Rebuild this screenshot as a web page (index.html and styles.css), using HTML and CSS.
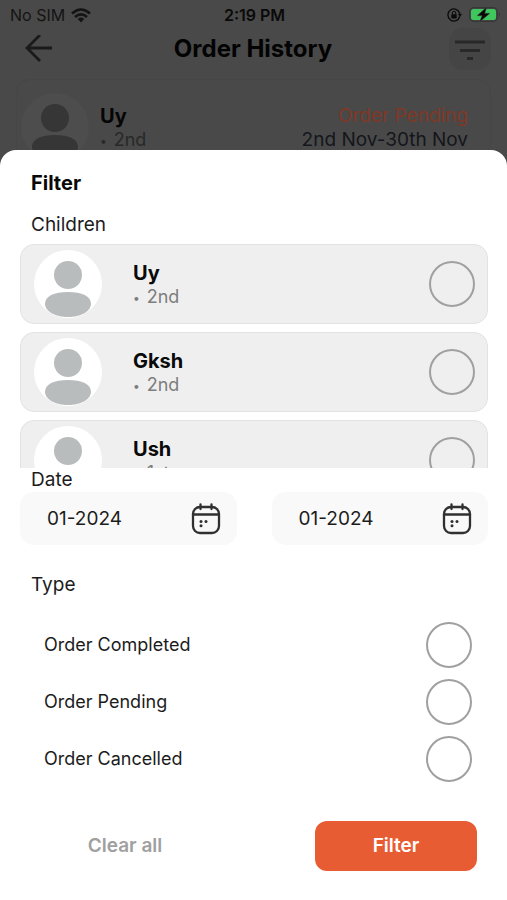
FILE: index.html
```html
<!DOCTYPE html>
<html lang="en">
<head>
<meta charset="utf-8">
<meta name="viewport" content="width=device-width, initial-scale=1">
<title>Order History</title>
<link rel="stylesheet" href="styles.css">
</head>
<body>
<svg class="sprite" aria-hidden="true">
  <symbol id="person" viewBox="0 0 68 68">
    <circle cx="34" cy="25" r="14"/>
    <path d="M11 54C11 46 20 42 34 42s23 4 23 12c0 7-10 13-23 13S11 61 11 54Z"/>
  </symbol>
  <symbol id="calendar" viewBox="0 0 30 32">
    <g fill="none" stroke="currentColor" stroke-width="2.300" stroke-linecap="round">
      <rect x="2" y="4" width="26" height="26" rx="7"/>
      <path d="M2 11.500H28M9.500 1.500V6M20.500 1.500V6"/>
    </g>
    <g fill="currentColor"><circle cx="10" cy="18.500" r="1.500"/><circle cx="15" cy="18.500" r="1.500"/><circle cx="10" cy="22.700" r="1.500"/></g>
  </symbol>
</svg>

<div class="screen">
  <div class="status">
    <div class="carrier">
      <span>No SIM</span>
      <svg width="20" height="15" viewBox="0 0 20 15" fill="none" stroke="currentColor" stroke-width="2.600">
        <path d="M1 5.500Q10-2.500 19 5.500M4 9Q10 3.600 16 9"/>
        <path d="M6.800 11Q10 8.200 13.200 11L10 14.500Z" fill="currentColor" stroke="none"/>
      </svg>
    </div>
    <span class="time">2:19 PM</span>
    <div class="indicators">
      <svg width="15" height="14" viewBox="0 0 15 14">
        <path d="M12.700 8.500A6 6 0 1 1 12.700 5.500" fill="none" stroke="currentColor" stroke-width="1.300"/>
        <path d="M10.800 5.800H15L13 9Z" fill="currentColor"/>
        <rect x="4.300" y="6.200" width="5.400" height="4.200" rx="0.800" fill="currentColor"/>
        <path d="M5.300 6.500V5a1.700 1.700 0 0 1 3.400 0V6.500" fill="none" stroke="currentColor"/>
      </svg>
      <svg width="33" height="16" viewBox="0 0 33 16">
        <rect x="0.700" y="0.700" width="27.600" height="13.600" rx="4" fill="none" stroke="#363636" stroke-width="1.200"/>
        <rect x="2" y="2" width="25" height="11" rx="2.500" fill="#3fc65c"/>
        <path d="M30 5Q32 7.500 30 10Z" fill="#363636"/>
        <path d="M17.800 0 8 8.700H13L10.500 15 21 6.300H15.800Z" fill="#080808" stroke="#3a5a40" stroke-width="0.500"/>
      </svg>
    </div>
  </div>

  <header class="topbar">
    <button class="back" type="button" aria-label="Back">
      <svg width="28" height="28" viewBox="0 0 28 28" fill="none" stroke="currentColor" stroke-width="2.800"><path d="M27 13H2M15 0 2 13 15 26"/></svg>
    </button>
    <h1>Order History</h1>
    <button class="sort" type="button" aria-label="Open filter">
      <svg width="32" height="22" viewBox="0 0 32 22" stroke="currentColor" stroke-width="3"><path d="M1 4H31M6 12.500H26M13 20.500H19"/></svg>
    </button>
  </header>

  <article class="order">
    <svg class="avatar"><use href="#person"/></svg>
    <div class="who"><strong>Uy</strong><span class="grade"><i>•</i>2nd</span></div>
    <div class="state"><span class="pending">Order Pending</span><span>2nd Nov-30th Nov</span></div>
  </article>
</div>

<form class="sheet" role="dialog" aria-labelledby="sheet-title">
  <h2 id="sheet-title">Filter</h2>
  <h3 class="children-title">Children</h3>
  <div class="children">
    <label class="child">
      <svg class="avatar"><use href="#person"/></svg>
      <span class="who"><strong>Uy</strong><span class="grade"><i>•</i>2nd</span></span>
      <input type="radio" name="child">
    </label>
    <label class="child">
      <svg class="avatar"><use href="#person"/></svg>
      <span class="who"><strong>Gksh</strong><span class="grade"><i>•</i>2nd</span></span>
      <input type="radio" name="child">
    </label>
    <label class="child">
      <svg class="avatar"><use href="#person"/></svg>
      <span class="who"><strong>Ush</strong><span class="grade"><i>•</i>1st</span></span>
      <input type="radio" name="child">
    </label>
  </div>

  <h3 class="date-title">Date</h3>
  <div class="dates">
    <label class="date"><input type="text" value="01-2024" aria-label="From month"><svg width="30" height="32"><use href="#calendar"/></svg></label>
    <label class="date"><input type="text" value="01-2024" aria-label="To month"><svg width="30" height="32"><use href="#calendar"/></svg></label>
  </div>

  <h3 class="type-title">Type</h3>
  <div class="types">
    <label><span>Order Completed</span><input type="radio" name="type"></label>
    <label><span>Order Pending</span><input type="radio" name="type"></label>
    <label><span>Order Cancelled</span><input type="radio" name="type"></label>
  </div>

  <div class="actions">
    <button class="clear" type="reset">Clear all</button>
    <button class="apply" type="button">Filter</button>
  </div>
</form>
</body>
</html>
```
FILE: styles.css
```css
* { box-sizing: border-box; }
body {
  margin: 0;
  min-height: 100vh;
  display: flex;
  flex-direction: column;
  background: #494949;
  color: #1c1c1c;
  font-family: Inter, "Liberation Sans", sans-serif;
  font-size: 18px;
  line-height: 24px;
}
h1, h2, h3 { margin: 0; }
button { border: 0; padding: 0; background: none; font: inherit; color: inherit; }
svg { display: block; flex: none; }
.sprite { position: absolute; width: 0; height: 0; }

.screen { height: 170px; overflow: hidden; color: #0a0a0a; }
.status {
  display: grid;
  grid-template-columns: 1fr auto 1fr;
  align-items: center;
  height: 28px;
  padding: 2px 8px 0 10px;
  font-size: 16px;
}
.carrier { display: flex; align-items: center; gap: 6px; color: #141414; }
.time { font-weight: 600; }
.indicators { display: flex; align-items: center; justify-content: flex-end; gap: 7px; margin-right: -3px; }
.topbar {
  display: grid;
  grid-template-columns: 32px 1fr 42px;
  align-items: center;
  height: 40px;
  padding: 0 16px 0 25px;
}
.back { color: #1a1a1a; }
.topbar h1 { font-size: 24px; line-height: 28px; text-align: center; color: #030303; }
.sort {
  display: grid;
  place-items: center;
  width: 42px;
  height: 42px;
  border-radius: 14px;
  background: #454545;
  color: #282828;
}
.order {
  display: flex;
  align-items: flex-start;
  height: 110px;
  margin: 11px 16px 0;
  padding: 13px 22px 0 4px;
  border: 1px solid #464646;
  border-radius: 14px;
}
.avatar { width: 68px; height: 68px; border-radius: 50%; background: #fff; fill: #b9bcbd; }
.order .avatar { background: #4d4d4d; fill: #363636; }
.who { display: flex; flex-direction: column; color: #7d7d7d; }
.who strong { font-size: 20px; color: #0a0a0a; }
.grade i { margin-right: 7px; font-size: 12px; font-style: normal; vertical-align: 1px; }
.order .who { margin: 11px 0 0 11px; color: #282828; }
.order .who strong { color: #050505; }
.state { margin: 11px 0 0 auto; display: flex; flex-direction: column; text-align: right; color: #14161c; font-size: 19px; }
.pending { color: #803826; }

.sheet {
  flex: 1;
  margin-top: -20px;
  padding: 21px 19px 30px 20px;
  border-radius: 16px 16px 0 0;
  background: #fff;
}
.sheet h2 { padding-left: 11px; font-size: 20px; line-height: 24px; color: #080808; }
.sheet h3 { padding-left: 11px; font-size: 19px; font-weight: 400; line-height: 24px; }
.children-title { margin: 18px 0 7px; }
.children {
  display: flex;
  flex-direction: column;
  gap: 8px;
  height: 224px;
  overflow-y: auto;
  scrollbar-width: none;
}
.child {
  display: flex;
  flex: none;
  align-items: center;
  height: 80px;
  padding: 0 12px 0 13px;
  border: 1px solid #e2e2e2;
  border-radius: 14px;
  background: #efefef;
}
.child .who { margin-left: 31px; padding-top: 3px; }
input[type="radio"] {
  appearance: none;
  width: 46px;
  height: 46px;
  margin: 0 0 0 auto;
  border: 2px solid #a0a0a0;
  border-radius: 50%;
}
input[type="radio"]:checked { border-width: 12px; border-color: #e85c33; }
.dates { display: grid; grid-template-columns: 1fr 1fr; gap: 35px; }
.date {
  display: flex;
  align-items: center;
  justify-content: space-between;
  height: 53px;
  padding: 0 16px 0 27px;
  border-radius: 14px;
  background: #f9f9f9;
  color: #303030;
}
.date input { width: 100px; padding: 0; border: 0; background: none; color: #1c1c1c; font: inherit; font-size: 19px; }
.type-title { margin-top: 28px; }
.types { display: grid; gap: 11px; margin: 25px 16px 0 24px; }
.types label { display: flex; align-items: center; }
.actions { display: flex; justify-content: space-between; margin: 39px 11px 0 24px; }
.actions button { width: 162px; height: 50px; border-radius: 12px; font-size: 19px; font-weight: 600; }
.clear { color: #a0a0a0; }
.apply { background: #e85c33; color: #fff; }
```
